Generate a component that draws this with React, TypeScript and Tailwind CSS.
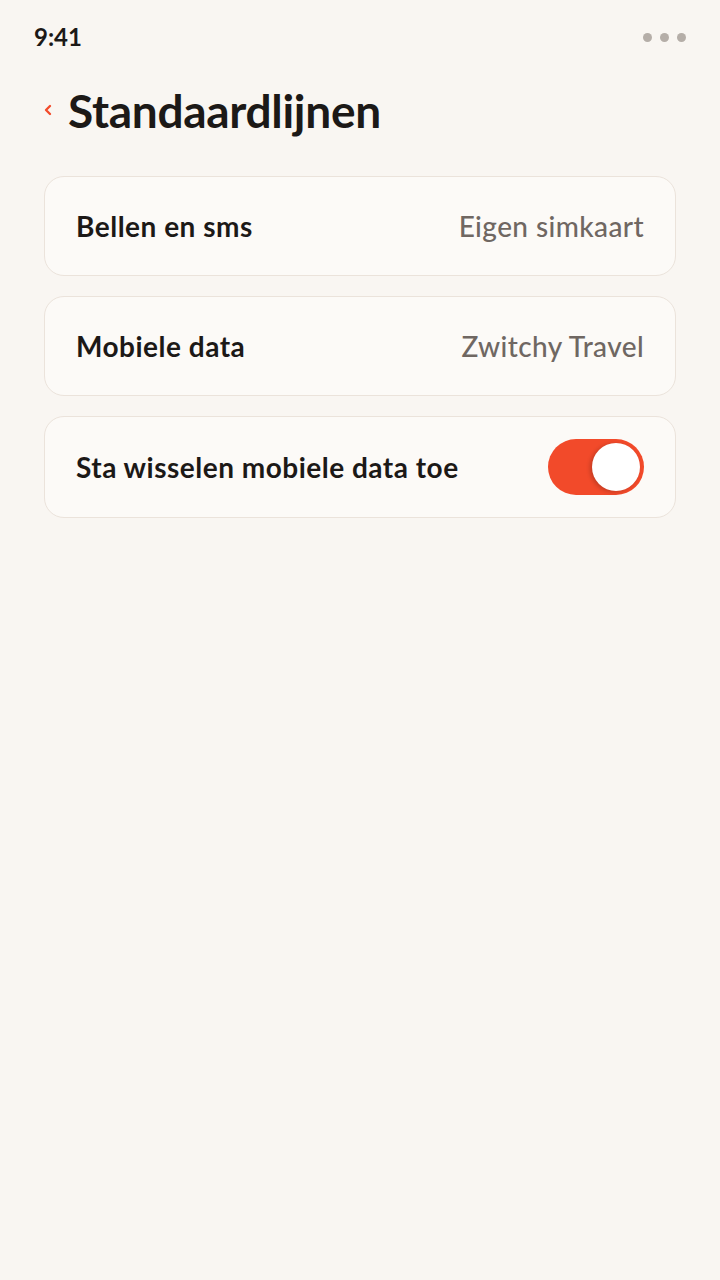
import { ChevronLeft } from "lucide-react";

const font = { fontFamily: "Lato, 'Open Sans', sans-serif" };

function Row({ label, value }: { label: string; value: string }) {
  return (
    <div className="flex h-[100px] items-center justify-between rounded-[20px] border border-[#ebe3db] bg-[#fcfaf7] px-[31px]">
      <span className="text-[28px] font-bold tracking-[0.5px] text-[#1c1917]">{label}</span>
      <span className="text-[28px] font-medium tracking-[0.4px] text-[#6f6762]">{value}</span>
    </div>
  );
}

export default function App() {
  return (
    <div style={font} className="min-h-[1280px] w-[720px] bg-[#f9f6f2]">
      <div className="flex h-[74px] items-center justify-between pl-[34px] pr-[34px]">
        <span className="text-[24px] font-bold text-[#1c1917]">9:41</span>
        <div className="flex gap-[8px]">
          <span className="h-[9px] w-[9px] rounded-full bg-[#b5aea8]" />
          <span className="h-[9px] w-[9px] rounded-full bg-[#b5aea8]" />
          <span className="h-[9px] w-[9px] rounded-full bg-[#b5aea8]" />
        </div>
      </div>

      <div className="flex h-[72px] items-center gap-[12px] pl-[40px]">
        <ChevronLeft className="h-[16px] w-[16px] text-[#f24a2a]" strokeWidth={3.5} />
        <h1 className="text-[46px] font-bold tracking-[-0.3px] text-[#1c1917]">Standaardlijnen</h1>
      </div>

      <div className="mt-[30px] flex flex-col gap-[20px] px-[44px]">
        <Row label="Bellen en sms" value="Eigen simkaart" />
        <Row label="Mobiele data" value="Zwitchy Travel" />
        <div className="flex h-[102px] items-center justify-between rounded-[20px] border border-[#ebe3db] bg-[#fcfaf7] pl-[31px] pr-[31px]">
          <span className="text-[28px] font-bold tracking-[0.5px] text-[#1c1917]">Sta wisselen mobiele data toe</span>
          <div className="flex h-[56px] w-[96px] items-center justify-end rounded-full bg-[#f24a2a] pr-[4px]">
            <span className="h-[48px] w-[48px] rounded-full bg-white shadow-[-2px_1px_4px_rgba(0,0,0,0.2)]" />
          </div>
        </div>
      </div>
    </div>
  );
}
